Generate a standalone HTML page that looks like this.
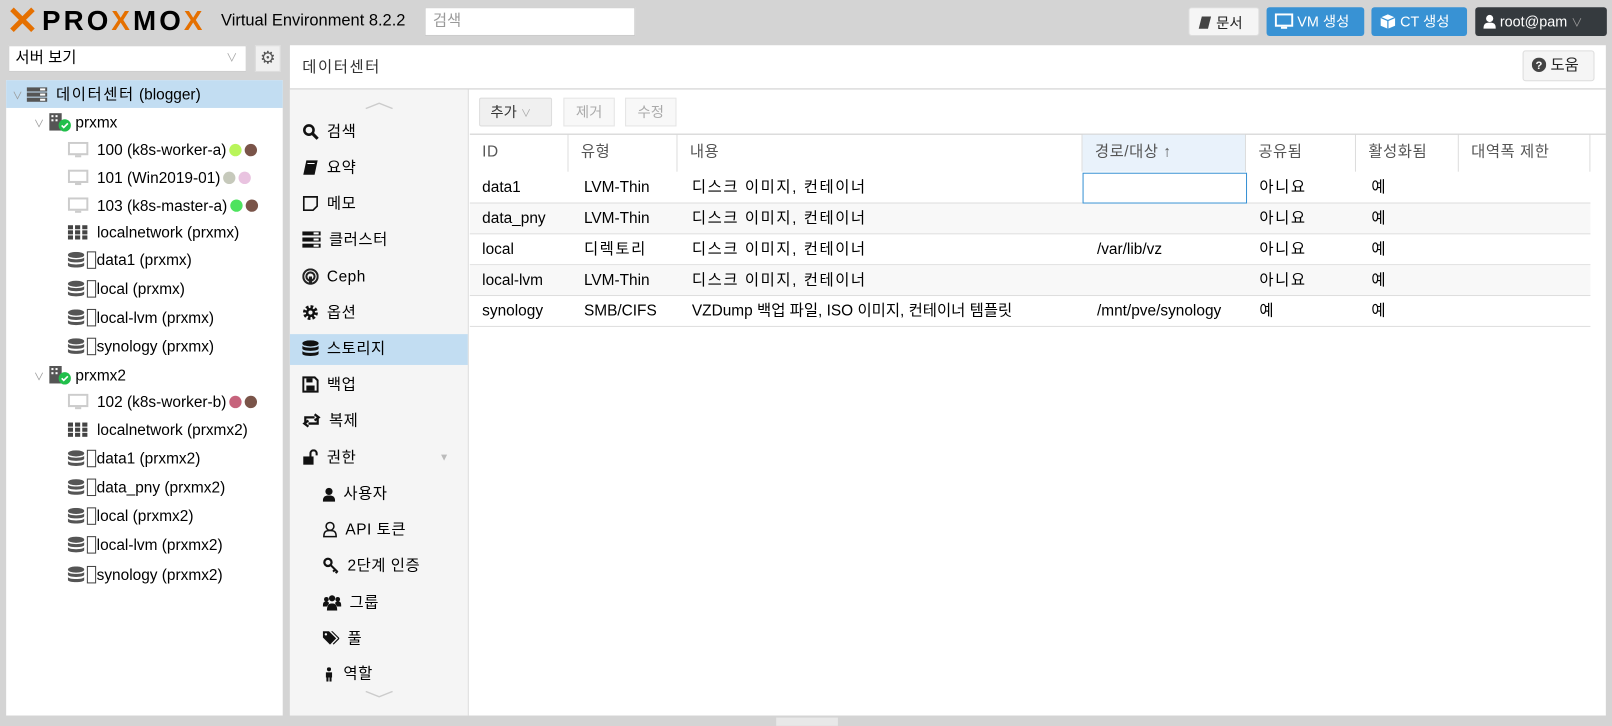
<!DOCTYPE html>
<html><head><meta charset="utf-8">
<style>
*{box-sizing:border-box;margin:0;padding:0}
body{width:1612px;height:724px;background:#d4d4d4;font-family:"Liberation Sans","Noto Sans CJK KR",sans-serif;font-size:15px;color:#000;position:relative;overflow:hidden}
#w{position:absolute;left:0;top:0;width:1568px;height:705px;transform:scale(1.02806);transform-origin:0 0}
.abs{position:absolute}
.btn{position:absolute;height:28px;border-radius:3px;font-size:14px;line-height:28px;padding-left:8px;color:#fff}
.tree div.r{position:absolute;height:27px;line-height:27px;white-space:nowrap}
.dot{display:inline-block;width:12px;height:12px;border-radius:6px;vertical-align:-1px;margin-left:3px}
.db{display:inline-block;width:16px;height:16px;vertical-align:-3px;margin-right:2px}
.menu div{position:absolute;left:12px;white-space:nowrap;height:20px;line-height:20px;letter-spacing:.5px}
.menu svg{vertical-align:-3px;margin-right:8px}
.th{position:absolute;top:131px;height:36px;line-height:34px;color:#555;padding-left:12px;border-right:1px solid #ddd;letter-spacing:.5px}
.row{position:absolute;left:457px;width:1090px;height:30px;border-bottom:1px solid #ddd;line-height:29px}
.row span{position:absolute;white-space:nowrap}
.k{letter-spacing:1.5px}
</style></head><body><div id="w">
<!-- header -->
<div class="abs" style="left:6px;top:3px;font-size:27px;font-weight:bold;letter-spacing:3px;color:#000;line-height:34px;white-space:nowrap">
<span style="color:#e57000;font-size:38px;vertical-align:-4px">✕</span>PRO<span style="color:#e57000">X</span>MO<span style="color:#e57000">X</span></div>
<div class="abs" style="left:215px;top:11px;font-size:16px;line-height:20px">Virtual Environment 8.2.2</div>
<div class="abs" style="left:413px;top:7px;width:205px;height:28px;background:#fff;border:1px solid #ccc;color:#999;line-height:26px;padding-left:7px">검색</div>
<div class="btn" style="left:1156px;top:7px;width:69px;background:#f5f5f5;color:#222;border:1px solid #ddd">
<svg width="14" height="14" viewBox="0 0 14 14" style="vertical-align:-2px"><path d="M4 1h9l-3 12H1z" fill="#444"/></svg> 문서</div>
<div class="btn" style="left:1232px;top:7px;width:95px;background:#3892d4">
<svg width="18" height="16" viewBox="0 0 18 16" style="vertical-align:-3px"><rect x="1" y="1" width="16" height="11" fill="none" stroke="#fff" stroke-width="2"/><rect x="6" y="13" width="6" height="2" fill="#fff"/></svg> VM 생성</div>
<div class="btn" style="left:1334px;top:7px;width:93px;background:#3892d4">
<svg width="16" height="16" viewBox="0 0 16 16" style="vertical-align:-3px"><path d="M8 1l7 3v8l-7 3-7-3V4z" fill="#fff"/><path d="M8 7v8M1 4l7 3 7-3" stroke="#3892d4" stroke-width="1.2" fill="none"/></svg> CT 생성</div>
<div class="btn" style="left:1435px;top:7px;width:128px;background:#353a3e">
<svg width="12" height="14" viewBox="0 0 12 14" style="vertical-align:-2px"><circle cx="6" cy="4" r="3.5" fill="#fff"/><path d="M0 14c0-5 2-6 6-6s6 1 6 6z" fill="#fff"/></svg> root@pam <span style="color:#999;font-size:11px">∨</span></div>

<!-- left -->
<div class="abs" style="left:8px;top:44px;width:232px;height:26px;background:#fff;border:1px solid #ccc;line-height:24px;padding-left:6px">서버 보기<span style="position:absolute;right:8px;color:#aaa;font-size:11px">∨</span></div>
<div class="abs" style="left:248px;top:44px;width:25px;height:26px;background:#f0f0f0;border:1px solid #ddd;text-align:center;line-height:24px;color:#555;font-size:17px">⚙</div>
<div class="abs tree" style="left:6px;top:78px;width:269px;height:618px;background:#fff">
<div class="abs" style="left:0;top:0;width:269px;height:27px;background:#c2ddf2"></div>
<div class="r" style="left:6px;top:1px"><span style="color:#999;font-size:10px">∨</span> <svg width="20" height="16" viewBox="0 0 20 16" style="vertical-align:-3px"><rect x="0" y="1" width="20" height="4" fill="#555"/><rect x="0" y="6" width="20" height="4" fill="#555"/><rect x="0" y="11" width="20" height="4" fill="#555"/><rect x="13" y="2" width="5" height="2" fill="#fff"/><rect x="13" y="7" width="5" height="2" fill="#fff"/><rect x="13" y="12" width="5" height="2" fill="#fff"/></svg> &nbsp;<span class="k">데이터센터</span> (blogger)</div>
<div class="r" style="left:27px;top:28px"><span style="color:#999;font-size:10px">∨</span> <svg width="22" height="18" viewBox="0 0 22 18" style="vertical-align:-4px"><rect x="1" y="0" width="12" height="17" fill="#555"/><rect x="3" y="2" width="2" height="2" fill="#fff"/><rect x="7" y="2" width="2" height="2" fill="#fff"/><rect x="3" y="6" width="2" height="2" fill="#fff"/><rect x="7" y="6" width="2" height="2" fill="#fff"/><circle cx="16" cy="12" r="6" fill="#21bf4b"/><path d="M13 12l2 2 4-4" stroke="#fff" stroke-width="1.6" fill="none"/></svg> prxmx</div>
<div class="r" style="left:60px;top:55px"><svg width="20" height="16" viewBox="0 0 20 16" style="vertical-align:-3px"><rect x="1" y="1" width="18" height="11" fill="none" stroke="#ccc" stroke-width="2"/><rect x="7" y="13" width="6" height="2" fill="#ccc"/></svg> &nbsp;100 (k8s-worker-a)<span class="dot" style="background:#b9f55a"></span><span class="dot" style="background:#7a5449"></span></div>
<div class="r" style="left:60px;top:82px"><svg width="20" height="16" viewBox="0 0 20 16" style="vertical-align:-3px"><rect x="1" y="1" width="18" height="11" fill="none" stroke="#ccc" stroke-width="2"/><rect x="7" y="13" width="6" height="2" fill="#ccc"/></svg> &nbsp;101 (Win2019-01)<span class="dot" style="background:#c6c9bb"></span><span class="dot" style="background:#e9c3e0"></span></div>
<div class="r" style="left:60px;top:109px"><svg width="20" height="16" viewBox="0 0 20 16" style="vertical-align:-3px"><rect x="1" y="1" width="18" height="11" fill="none" stroke="#ccc" stroke-width="2"/><rect x="7" y="13" width="6" height="2" fill="#ccc"/></svg> &nbsp;103 (k8s-master-a)<span class="dot" style="background:#4de35e"></span><span class="dot" style="background:#7a5449"></span></div>
<div class="r" style="left:60px;top:135px"><svg width="20" height="14" viewBox="0 0 20 14" style="vertical-align:-2px" fill="#444"><rect x="0" y="0" width="5" height="4"/><rect x="7" y="0" width="5" height="4"/><rect x="14" y="0" width="5" height="4"/><rect x="0" y="5" width="5" height="4"/><rect x="7" y="5" width="5" height="4"/><rect x="14" y="5" width="5" height="4"/><rect x="0" y="10" width="5" height="4"/><rect x="7" y="10" width="5" height="4"/><rect x="14" y="10" width="5" height="4"/></svg> &nbsp;localnetwork (prxmx)</div>
<div class="r" style="left:60px;top:162px"><svg class="db" viewBox="0 0 16 16"><ellipse cx="8" cy="3" rx="8" ry="3" fill="#555"/><path d="M0 5c0 3 16 3 16 0v3c0 3-16 3-16 0zM0 10c0 3 16 3 16 0v3c0 3-16 3-16 0z" fill="#555"/></svg><svg width="10" height="18" viewBox="0 0 10 18" style="vertical-align:-4px"><rect x="1" y="1" width="8" height="16" fill="none" stroke="#444"/></svg>data1 (prxmx)</div>
<div class="r" style="left:60px;top:190px"><svg class="db" viewBox="0 0 16 16"><ellipse cx="8" cy="3" rx="8" ry="3" fill="#555"/><path d="M0 5c0 3 16 3 16 0v3c0 3-16 3-16 0zM0 10c0 3 16 3 16 0v3c0 3-16 3-16 0z" fill="#555"/></svg><svg width="10" height="18" viewBox="0 0 10 18" style="vertical-align:-4px"><rect x="1" y="1" width="8" height="16" fill="none" stroke="#444"/></svg>local (prxmx)</div>
<div class="r" style="left:60px;top:218px"><svg class="db" viewBox="0 0 16 16"><ellipse cx="8" cy="3" rx="8" ry="3" fill="#555"/><path d="M0 5c0 3 16 3 16 0v3c0 3-16 3-16 0zM0 10c0 3 16 3 16 0v3c0 3-16 3-16 0z" fill="#555"/></svg><svg width="10" height="18" viewBox="0 0 10 18" style="vertical-align:-4px"><rect x="1" y="1" width="8" height="16" fill="none" stroke="#444"/></svg>local-lvm (prxmx)</div>
<div class="r" style="left:60px;top:246px"><svg class="db" viewBox="0 0 16 16"><ellipse cx="8" cy="3" rx="8" ry="3" fill="#555"/><path d="M0 5c0 3 16 3 16 0v3c0 3-16 3-16 0zM0 10c0 3 16 3 16 0v3c0 3-16 3-16 0z" fill="#555"/></svg><svg width="10" height="18" viewBox="0 0 10 18" style="vertical-align:-4px"><rect x="1" y="1" width="8" height="16" fill="none" stroke="#444"/></svg>synology (prxmx)</div>
<div class="r" style="left:27px;top:274px"><span style="color:#999;font-size:10px">∨</span> <svg width="22" height="18" viewBox="0 0 22 18" style="vertical-align:-4px"><rect x="1" y="0" width="12" height="17" fill="#555"/><rect x="3" y="2" width="2" height="2" fill="#fff"/><rect x="7" y="2" width="2" height="2" fill="#fff"/><rect x="3" y="6" width="2" height="2" fill="#fff"/><rect x="7" y="6" width="2" height="2" fill="#fff"/><circle cx="16" cy="12" r="6" fill="#21bf4b"/><path d="M13 12l2 2 4-4" stroke="#fff" stroke-width="1.6" fill="none"/></svg> prxmx2</div>
<div class="r" style="left:60px;top:300px"><svg width="20" height="16" viewBox="0 0 20 16" style="vertical-align:-3px"><rect x="1" y="1" width="18" height="11" fill="none" stroke="#ccc" stroke-width="2"/><rect x="7" y="13" width="6" height="2" fill="#ccc"/></svg> &nbsp;102 (k8s-worker-b)<span class="dot" style="background:#c6637c"></span><span class="dot" style="background:#7a5449"></span></div>
<div class="r" style="left:60px;top:327px"><svg width="20" height="14" viewBox="0 0 20 14" style="vertical-align:-2px" fill="#444"><rect x="0" y="0" width="5" height="4"/><rect x="7" y="0" width="5" height="4"/><rect x="14" y="0" width="5" height="4"/><rect x="0" y="5" width="5" height="4"/><rect x="7" y="5" width="5" height="4"/><rect x="14" y="5" width="5" height="4"/><rect x="0" y="10" width="5" height="4"/><rect x="7" y="10" width="5" height="4"/><rect x="14" y="10" width="5" height="4"/></svg> &nbsp;localnetwork (prxmx2)</div>
<div class="r" style="left:60px;top:355px"><svg class="db" viewBox="0 0 16 16"><ellipse cx="8" cy="3" rx="8" ry="3" fill="#555"/><path d="M0 5c0 3 16 3 16 0v3c0 3-16 3-16 0zM0 10c0 3 16 3 16 0v3c0 3-16 3-16 0z" fill="#555"/></svg><svg width="10" height="18" viewBox="0 0 10 18" style="vertical-align:-4px"><rect x="1" y="1" width="8" height="16" fill="none" stroke="#444"/></svg>data1 (prxmx2)</div>
<div class="r" style="left:60px;top:383px"><svg class="db" viewBox="0 0 16 16"><ellipse cx="8" cy="3" rx="8" ry="3" fill="#555"/><path d="M0 5c0 3 16 3 16 0v3c0 3-16 3-16 0zM0 10c0 3 16 3 16 0v3c0 3-16 3-16 0z" fill="#555"/></svg><svg width="10" height="18" viewBox="0 0 10 18" style="vertical-align:-4px"><rect x="1" y="1" width="8" height="16" fill="none" stroke="#444"/></svg>data_pny (prxmx2)</div>
<div class="r" style="left:60px;top:411px"><svg class="db" viewBox="0 0 16 16"><ellipse cx="8" cy="3" rx="8" ry="3" fill="#555"/><path d="M0 5c0 3 16 3 16 0v3c0 3-16 3-16 0zM0 10c0 3 16 3 16 0v3c0 3-16 3-16 0z" fill="#555"/></svg><svg width="10" height="18" viewBox="0 0 10 18" style="vertical-align:-4px"><rect x="1" y="1" width="8" height="16" fill="none" stroke="#444"/></svg>local (prxmx2)</div>
<div class="r" style="left:60px;top:439px"><svg class="db" viewBox="0 0 16 16"><ellipse cx="8" cy="3" rx="8" ry="3" fill="#555"/><path d="M0 5c0 3 16 3 16 0v3c0 3-16 3-16 0zM0 10c0 3 16 3 16 0v3c0 3-16 3-16 0z" fill="#555"/></svg><svg width="10" height="18" viewBox="0 0 10 18" style="vertical-align:-4px"><rect x="1" y="1" width="8" height="16" fill="none" stroke="#444"/></svg>local-lvm (prxmx2)</div>
<div class="r" style="left:60px;top:468px"><svg class="db" viewBox="0 0 16 16"><ellipse cx="8" cy="3" rx="8" ry="3" fill="#555"/><path d="M0 5c0 3 16 3 16 0v3c0 3-16 3-16 0zM0 10c0 3 16 3 16 0v3c0 3-16 3-16 0z" fill="#555"/></svg><svg width="10" height="18" viewBox="0 0 10 18" style="vertical-align:-4px"><rect x="1" y="1" width="8" height="16" fill="none" stroke="#444"/></svg>synology (prxmx2)</div>
</div>

<!-- right panel -->
<div class="abs" style="left:282px;top:44px;width:1280px;height:652px;background:#fff"></div>
<div class="abs" style="left:282px;top:86px;width:1280px;height:1px;background:#ccc"></div>
<div class="abs k" style="left:294px;top:54px;font-size:15px;color:#333">데이터센터</div>
<div class="abs" style="left:1481px;top:49px;width:70px;height:30px;background:#f5f5f5;border:1px solid #ddd;border-radius:3px;line-height:28px;padding-left:8px;color:#222"><svg width="14" height="14" viewBox="0 0 14 14" style="vertical-align:-2px"><circle cx="7" cy="7" r="7" fill="#444"/><text x="7" y="11" font-size="11" font-weight="bold" fill="#fff" text-anchor="middle" font-family="Liberation Sans">?</text></svg> 도움</div>

<!-- menu -->
<div class="abs menu" style="left:282px;top:87px;width:174px;height:609px;background:#f5f5f5;border-right:1px solid #ddd">
<div style="left:78px;top:2px;color:#ccc;font-size:18px;transform:scaleX(1.6)">︿</div>
<div style="left:0;width:173px;height:30px;top:238px;background:#c2ddf2"></div>
<div style="top:32px"><svg width="16" height="16" viewBox="0 0 16 16"><circle cx="6.5" cy="6.5" r="4.5" fill="none" stroke="#111" stroke-width="2.5"/><path d="M10 10l5 5" stroke="#111" stroke-width="3"/></svg>검색</div>
<div style="top:67px"><svg width="16" height="16" viewBox="0 0 16 16"><path d="M4 1h11l-3 14H1z" fill="#111"/><path d="M5 4h7" stroke="#fff"/></svg>요약</div>
<div style="top:102px"><svg width="16" height="16" viewBox="0 0 16 16"><path d="M1.5 1.5h13v9l-4 4h-9z" fill="none" stroke="#111" stroke-width="1.6"/></svg>메모</div>
<div style="top:137px"><svg width="18" height="16" viewBox="0 0 18 16" fill="#111"><rect y="0" width="18" height="4"/><rect y="6" width="18" height="4"/><rect y="12" width="18" height="4"/><rect x="11" y="1" width="5" height="2" fill="#fff"/><rect x="11" y="7" width="5" height="2" fill="#fff"/><rect x="11" y="13" width="5" height="2" fill="#fff"/></svg>클러스터</div>
<div style="top:173px"><svg width="16" height="16" viewBox="0 0 16 16"><circle cx="8" cy="8" r="7" fill="none" stroke="#222" stroke-width="2"/><circle cx="8" cy="8" r="4" fill="none" stroke="#222" stroke-width="2"/><path d="M8 8v8" stroke="#222" stroke-width="3"/></svg>Ceph</div>
<div style="top:208px"><svg width="16" height="16" viewBox="0 0 16 16"><circle cx="8" cy="8" r="5.5" fill="none" stroke="#111" stroke-width="3.5" stroke-dasharray="2.5 1.8"/><circle cx="8" cy="8" r="4.5" fill="#111"/><circle cx="8" cy="8" r="2" fill="#f5f5f5"/></svg>옵션</div>
<div style="top:243px"><svg width="16" height="16" viewBox="0 0 16 16"><ellipse cx="8" cy="3" rx="8" ry="3" fill="#111"/><path d="M0 5c0 3 16 3 16 0v3c0 3-16 3-16 0zM0 10c0 3 16 3 16 0v3c0 3-16 3-16 0z" fill="#111"/></svg>스토리지</div>
<div style="top:278px"><svg width="16" height="16" viewBox="0 0 16 16"><path d="M1 1h11l3 3v11H1z" fill="none" stroke="#111" stroke-width="2"/><rect x="4" y="2" width="6" height="4" fill="#111"/><rect x="4" y="9" width="8" height="5" fill="#111"/></svg>백업</div>
<div style="top:313px"><svg width="18" height="16" viewBox="0 0 18 16"><path d="M3 12V5h9M12 2l4 3-4 3M15 4v7H6M6 14l-4-3 4-3" fill="none" stroke="#111" stroke-width="2.2"/></svg>복제</div>
<div style="top:349px"><svg width="16" height="16" viewBox="0 0 16 16"><rect x="1" y="7" width="10" height="8" fill="#111"/><path d="M8 7V4a3 3 0 016 0v2" fill="none" stroke="#111" stroke-width="2"/></svg>권한<span style="position:absolute;left:133px;color:#bbb;font-size:10px">▼</span></div>
<div style="top:384px;left:32px"><svg width="12" height="14" viewBox="0 0 12 14"><circle cx="6" cy="4" r="3.5" fill="#111"/><path d="M0 14c0-5 2-6 6-6s6 1 6 6z" fill="#111"/></svg>사용자</div>
<div style="top:419px;left:32px"><svg width="14" height="16" viewBox="0 0 14 16"><circle cx="7" cy="5" r="3.8" fill="none" stroke="#111" stroke-width="1.5"/><path d="M1 15c0-5 2-6 6-6s6 1 6 6z" fill="none" stroke="#111" stroke-width="1.5"/></svg>API 토큰</div>
<div style="top:454px;left:32px"><svg width="16" height="16" viewBox="0 0 16 16"><circle cx="5" cy="5" r="3.5" fill="none" stroke="#111" stroke-width="2.2"/><path d="M7.5 7.5l7 7M12 12l-2 2M14 14l-1.5 1.5" stroke="#111" stroke-width="2"/></svg>2단계 인증</div>
<div style="top:490px;left:32px"><svg width="18" height="16" viewBox="0 0 18 16" fill="#111"><circle cx="9" cy="4" r="3"/><circle cx="3.5" cy="5" r="2.3"/><circle cx="14.5" cy="5" r="2.3"/><path d="M4 16c0-6 2-7 5-7s5 1 5 7z"/><path d="M0 12c0-4 1-5 3.5-5S6 9 6 9L4 12z"/><path d="M18 12c0-4-1-5-3.5-5S12 9 12 9l2 3z"/></svg>그룹</div>
<div style="top:525px;left:32px"><svg width="16" height="16" viewBox="0 0 16 16" fill="#111"><path d="M0 1h6l7 7-6 6-7-7z"/><path d="M8 1h1.5l7 7-6 6-.8-.8 5.2-5.2z"/><circle cx="3" cy="4" r="1.2" fill="#f5f5f5"/></svg>풀</div>
<div style="top:559px;left:32px"><svg width="12" height="14" viewBox="0 0 12 14" fill="#111"><circle cx="6" cy="2" r="2"/><rect x="3" y="5" width="6" height="5"/><rect x="3.5" y="9" width="2" height="5"/><rect x="6.5" y="9" width="2" height="5"/></svg>역할</div>
<div style="left:78px;top:584px;color:#ccc;font-size:18px;transform:scaleX(1.6)">﹀</div>
</div>

<!-- toolbar -->
<div class="abs" style="left:466px;top:95px;width:71px;height:28px;background:#f0f0f0;border:1px solid #ddd;border-radius:2px;line-height:26px;padding-left:10px;color:#333;font-size:14px">추가 <span style="color:#aaa;font-size:10px">∨</span></div>
<div class="abs" style="left:548px;top:95px;width:50px;height:28px;background:#f8f8f8;border:1px solid #e5e5e5;line-height:26px;text-align:center;color:#aaa;font-size:14px">제거</div>
<div class="abs" style="left:608px;top:95px;width:50px;height:28px;background:#f8f8f8;border:1px solid #e5e5e5;line-height:26px;text-align:center;color:#aaa;font-size:14px">수정</div>
<div class="abs" style="left:457px;top:130px;width:1105px;height:1px;background:#ccc"></div>

<!-- table header -->
<div class="th" style="left:457px;width:96px">ID</div>
<div class="th" style="left:553px;width:106px">유형</div>
<div class="th" style="left:659px;width:394px">내용</div>
<div class="th" style="left:1053px;width:159px;background:#e9f2fb">경로/대상 ↑</div>
<div class="th" style="left:1212px;width:107px">공유됨</div>
<div class="th" style="left:1319px;width:100px">활성화됨</div>
<div class="th" style="left:1419px;width:128px">대역폭 제한</div>

<div class="row" style="top:168px;background:#fff"><span style="left:12px">data1</span><span style="left:111px">LVM-Thin</span><span class="k" style="left:216px">디스크 이미지, 컨테이너</span><span style="left:596px;top:0;width:160px;height:30px;border:1px solid #3892d4"></span><span class="k" style="left:768px">아니요</span><span style="left:877px">예</span></div>
<div class="row" style="top:198px;background:#f8f8f8"><span style="left:12px">data_pny</span><span style="left:111px">LVM-Thin</span><span class="k" style="left:216px">디스크 이미지, 컨테이너</span><span class="k" style="left:768px">아니요</span><span style="left:877px">예</span></div>
<div class="row" style="top:228px;background:#fff"><span style="left:12px">local</span><span class="k" style="left:111px">디렉토리</span><span class="k" style="left:216px">디스크 이미지, 컨테이너</span><span style="left:610px">/var/lib/vz</span><span class="k" style="left:768px">아니요</span><span style="left:877px">예</span></div>
<div class="row" style="top:258px;background:#f8f8f8"><span style="left:12px">local-lvm</span><span style="left:111px">LVM-Thin</span><span class="k" style="left:216px">디스크 이미지, 컨테이너</span><span class="k" style="left:768px">아니요</span><span style="left:877px">예</span></div>
<div class="row" style="top:288px;background:#fff"><span style="left:12px">synology</span><span style="left:111px">SMB/CIFS</span><span style="left:216px">VZDump 백업 파일, ISO 이미지, 컨테이너 템플릿</span><span style="left:610px">/mnt/pve/synology</span><span style="left:768px">예</span><span style="left:877px">예</span></div>

<div class="abs" style="left:755px;top:698px;width:60px;height:8px;background:#e8e8e8"></div>
</div></body></html>
